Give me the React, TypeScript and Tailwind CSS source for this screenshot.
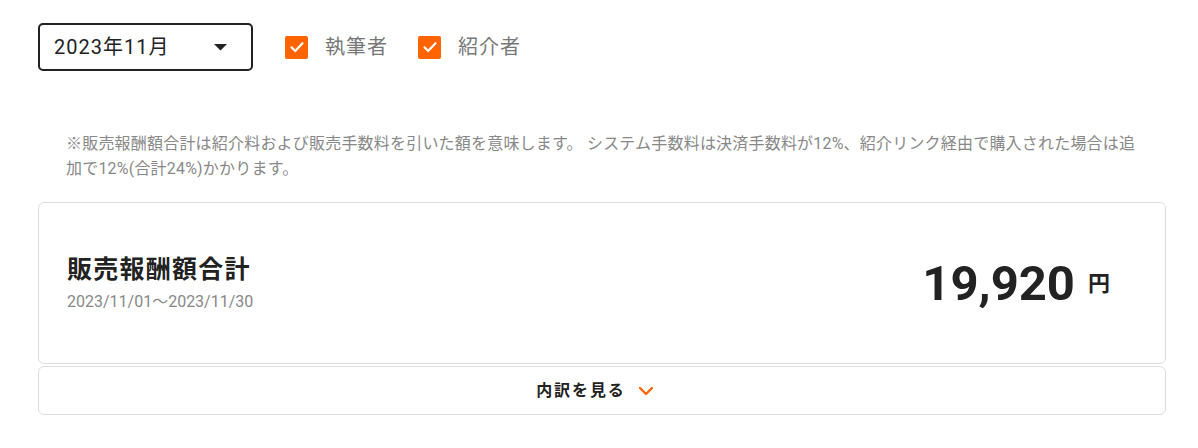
import React, { useState } from 'react';

const font = "font-['Roboto','Noto_Sans_CJK_JP',sans-serif]";

const CheckBox = ({ label, checked, onChange }: { label: string; checked: boolean; onChange: () => void }) => (
  <label className="flex items-center gap-[17px] cursor-pointer select-none">
    <span
      onClick={onChange}
      className={`flex h-[23px] w-[23px] items-center justify-center rounded-[2px] ${checked ? 'bg-[#ff6400]' : 'border-2 border-[#999] bg-white'}`}
    >
      {checked && (
        <svg width="16" height="16" viewBox="0 0 16 16" fill="none">
          <path d="M2.5 8.3 L6.2 12 L13.5 4.2" stroke="white" strokeWidth="2.2" strokeLinecap="round" strokeLinejoin="round" />
        </svg>
      )}
    </span>
    <span className="text-[20px] tracking-[0.05em] text-[#777]">{label}</span>
  </label>
);

const App = () => {
  const [writer, setWriter] = useState(true);
  const [referrer, setReferrer] = useState(true);

  return (
    <div className={`${font} min-h-[448px] bg-white pl-[38px] pr-[32px] pt-[23px] text-[#222]`}>
      {/* Filters */}
      <div className="flex items-center gap-[32px]">
        <button className="flex h-[48px] w-[215px] items-center justify-between rounded-[5px] border-2 border-[#222] pl-[14px] pr-[24px]">
          <span className="text-[20px] tracking-[0.05em]">2023年11月</span>
          <svg width="13" height="7" viewBox="0 0 13 7">
            <path d="M0 0 L13 0 L6.5 6.5 Z" fill="#222" />
          </svg>
        </button>
        <div className="flex items-center gap-[30px]">
          <CheckBox label="執筆者" checked={writer} onChange={() => setWriter(!writer)} />
          <CheckBox label="紹介者" checked={referrer} onChange={() => setReferrer(!referrer)} />
        </div>
      </div>

      {/* Note */}
      <p className="mt-[60px] px-[28px] text-[16px] leading-[25px] tracking-[0.2px] text-[#888]">
        ※販売報酬額合計は紹介料および販売手数料を引いた額を意味します。 システム手数料は決済手数料が12%、紹介リンク経由で購入された場合は追加で12%(合計24%)かかります。
      </p>

      {/* Summary card */}
      <div className="mt-[21px] flex flex-col gap-[2px]">
        <div className="flex h-[162px] items-center justify-between rounded-[6px] border border-[#ddd] pl-[28px] pr-[55px]">
          <div className="flex flex-col">
            <span className="text-[25px] font-bold tracking-[0.05em] leading-[34px]">販売報酬額合計</span>
            <span className="mt-[3px] text-[16px] text-[#888]">2023/11/01～2023/11/30</span>
          </div>
          <div className="flex items-center gap-[13px]">
            <span className="text-[49px] font-bold leading-none">19,920</span>
            <span className="text-[22px] font-bold">円</span>
          </div>
        </div>
        <button className="flex h-[49px] items-center justify-center gap-[12px] rounded-[6px] border border-[#ddd] pr-[14px]">
          <span className="text-[16px] font-bold tracking-[0.12em]">内訳を見る</span>
          <svg width="16" height="10" viewBox="0 0 16 10" fill="none">
            <path d="M2 2 L8 8 L14 2" stroke="#ff6400" strokeWidth="2.4" strokeLinecap="round" strokeLinejoin="round" />
          </svg>
        </button>
      </div>
    </div>
  );
};

export default App;
